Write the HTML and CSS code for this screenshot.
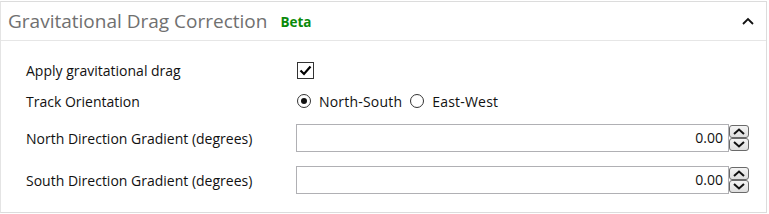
FILE: index.html
```html
<!DOCTYPE html>
<html lang="en">
<head>
    <meta charset="UTF-8">
    <title>Gravitational Drag Correction</title>
    <link rel="stylesheet" href="styles.css">
</head>
<body>
    <div class="panel">
        <div class="panel-header">
            <span class="panel-title">Gravitational Drag Correction</span>
            <span class="badge">Beta</span>
            <svg class="collapse" width="12" height="8" viewBox="0 0 12 8">
                <path d="M1 7 L6 2 L11 7" fill="none" stroke="#111" stroke-width="1.8"/>
            </svg>
        </div>

        <div class="panel-body">
            <div class="row row-small">
                <span class="label">Apply gravitational drag</span>
                <span class="checkbox">
                    <svg width="13" height="11" viewBox="0 0 13 11">
                        <path d="M1.5 5.5 L5 9 L11.5 1.5" fill="none" stroke="#000" stroke-width="2.2"/>
                    </svg>
                </span>
            </div>

            <div class="row row-small">
                <span class="label">Track Orientation</span>
                <span class="radio checked"></span>
                <span class="radio-text">North-South</span>
                <span class="radio"></span>
                <span class="radio-text">East-West</span>
            </div>

            <div class="row row-input">
                <span class="label">North Direction Gradient (degrees)</span>
                <div class="number-box">0.00</div>
                <div class="spinner">
                    <span class="spin-btn">
                        <svg width="12" height="7" viewBox="0 0 12 7"><path d="M1 6 L6 1.5 L11 6" fill="none" stroke="#111" stroke-width="2"/></svg>
                    </span>
                    <span class="spin-btn">
                        <svg width="12" height="7" viewBox="0 0 12 7"><path d="M1 1 L6 5.5 L11 1" fill="none" stroke="#111" stroke-width="2"/></svg>
                    </span>
                </div>
            </div>

            <div class="row row-input">
                <span class="label">South Direction Gradient (degrees)</span>
                <div class="number-box">0.00</div>
                <div class="spinner">
                    <span class="spin-btn">
                        <svg width="12" height="7" viewBox="0 0 12 7"><path d="M1 6 L6 1.5 L11 6" fill="none" stroke="#111" stroke-width="2"/></svg>
                    </span>
                    <span class="spin-btn">
                        <svg width="12" height="7" viewBox="0 0 12 7"><path d="M1 1 L6 5.5 L11 1" fill="none" stroke="#111" stroke-width="2"/></svg>
                    </span>
                </div>
            </div>
        </div>
    </div>
</body>
</html>
```

FILE: styles.css
```css
body {
    margin: 0;
    padding-top: 1px;
    font-family: "Open Sans", "Noto Sans", Arial, sans-serif;
    font-size: 14px;
    color: #111;
    background: #fff;
}
.panel {
    width: 765px;
    border: 1px solid #dcdcdc;
    border-left-color: #e4e4e4;
}
.panel-header {
    display: flex;
    align-items: center;
    height: 38px;
    padding: 0 12px 0 7px;
    border-bottom: 1px solid #e6e6e6;
}
.panel-title {
    font-size: 19px;
    color: #707070;
}
.badge {
    margin-left: 13px;
    margin-top: 2px;
    font-size: 13.5px;
    font-weight: bold;
    color: #0a8a0a;
}
.collapse {
    margin-left: auto;
}
.panel-body {
    display: flex;
    flex-direction: column;
    padding: 17px 0 18px 25px;
}
.row {
    display: flex;
    align-items: center;
}
.row-small {
    height: 24px;
    margin-bottom: 7px;
}
.row-small + .row-input {
    margin-top: 4px;
}
.row-input {
    height: 28px;
    margin-bottom: 14px;
}
.row-input:last-child {
    margin-bottom: 0;
}
.label {
    width: 270px;
    flex-shrink: 0;
}
.checkbox {
    width: 15px;
    height: 15px;
    border: 1px solid #333;
    display: flex;
    align-items: center;
    justify-content: center;
    margin-left: 1px;
}
.radio {
    width: 12px;
    height: 12px;
    border: 1px solid #333;
    border-radius: 50%;
    margin: 0 8px 0 1px;
    position: relative;
    flex-shrink: 0;
}
.radio.checked::after {
    content: "";
    position: absolute;
    left: 3px;
    top: 3px;
    width: 6px;
    height: 6px;
    border-radius: 50%;
    background: #111;
}
.radio-text {
    margin-right: 7px;
    letter-spacing: 0.2px;
}
.number-box {
    width: 426px;
    height: 26px;
    border: 1px solid #b0b0b4;
    text-align: right;
    line-height: 26px;
    padding-right: 5px;
    box-sizing: content-box;
}
.spinner {
    display: flex;
    flex-direction: column;
}
.spin-btn {
    width: 18px;
    height: 11px;
    border: 1px solid #6a6a6a;
    border-radius: 3px;
    background: linear-gradient(#f4f4f4, #dedede);
    display: flex;
    align-items: center;
    justify-content: center;
}
```
